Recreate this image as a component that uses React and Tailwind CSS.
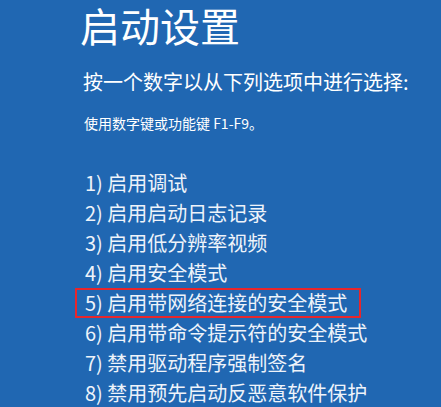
const options = [
  '1) 启用调试',
  '2) 启用启动日志记录',
  '3) 启用低分辨率视频',
  '4) 启用安全模式',
  '5) 启用带网络连接的安全模式',
  '6) 启用带命令提示符的安全模式',
  '7) 禁用驱动程序强制签名',
  '8) 禁用预先启动反恶意软件保护',
]

export default function App() {
  return (
    <div
      className="w-[441px] h-[407px] overflow-hidden bg-[#2067b2] text-white"
      style={{ fontFamily: '"Noto Sans CJK SC", "Noto Sans", sans-serif' }}
    >
      <h1 className="pl-[80px] pt-[1px] text-[40px] leading-[48px] font-normal">启动设置</h1>

      <p className="pl-[83px] mt-[21px] text-[20px] leading-[24px]">按一个数字以从下列选项中进行选择:</p>

      <p className="pl-[84px] mt-[20px] text-[14px] leading-[18px]">使用数字键或功能键 F1-F9。</p>

      <ul className="mt-[36px] flex flex-col">
        {options.map((o, i) => (
          <li key={o} className="pl-[75px] h-[30px]">
            <div
              className={
                'w-[286px] h-[30px] pl-[8px] text-[20px] leading-[26px] whitespace-nowrap text-[#eef3fa] border-2 ' +
                (i === 4 ? 'border-[#e8262b]' : 'border-transparent')
              }
            >
              {o}
            </div>
          </li>
        ))}
      </ul>
    </div>
  )
}
